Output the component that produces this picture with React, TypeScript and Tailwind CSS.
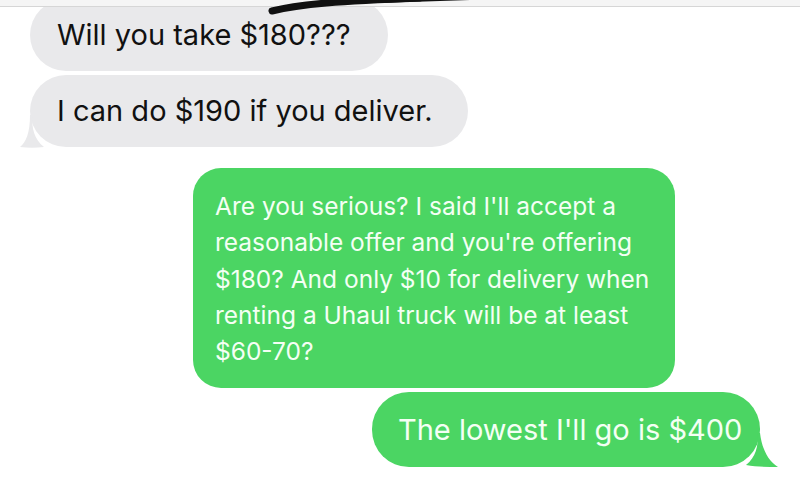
import React from "react";

const font = { fontFamily: 'Inter, "Liberation Sans", Arial, sans-serif' };

export default function App() {
  return (
    <div className="relative w-[800px] h-[481px] overflow-hidden bg-white" style={font}>
      <div className="flex flex-col mt-[-1px]">
        <div className="ml-[30px] w-[358px] h-[72px] rounded-[36px] bg-[#e9e9eb] pl-[27px] flex items-center text-[29px] text-[#111]">
          Will you take $180???
        </div>
        <div className="relative ml-[30px] mt-[4px] w-[438px] h-[72px] rounded-[36px] bg-[#e9e9eb] pl-[27px] flex items-center text-[29px] text-[#111]">
          <svg className="absolute left-[-12px] top-[40px]" width="40" height="34" viewBox="0 0 40 34">
            <path d="M12 0 L14 0 C14 14 16 24 26 32 C18 33 10 33 2 32 C8 27 12 18 12 0 Z" fill="#e9e9eb" />
          </svg>
          <span className="relative">I can do $190 if you deliver.</span>
        </div>
        <div className="ml-[193px] mt-[21px] w-[482px] h-[220px] rounded-[28px] bg-[#4bd563] pl-[22px] pt-[20px] text-[24.5px] leading-[36.3px] text-[#f4fff4]">
          Are you serious? I said I'll accept a<br />
          reasonable offer and you're offering<br />
          $180? And only $10 for delivery when<br />
          renting a Uhaul truck will be at least<br />
          $60-70?
        </div>
        <div className="relative ml-[372px] mt-[4px] w-[388px] h-[75px] rounded-[37px] bg-[#4bd563] pl-[26px] flex items-center text-[29px] text-[#f4fff4]">
          <svg className="absolute right-[-20px] top-[41px]" width="40" height="34" viewBox="0 0 40 34">
            <path d="M20 0 L18 0 C18 14 16 24 6 32 C16 34 28 34 38 34 C28 28 22 16 20 0 Z" fill="#4bd563" />
          </svg>
          <span className="relative">The lowest I'll go is $400</span>
        </div>
      </div>
      <div className="absolute top-0 left-0 w-[800px] h-[7px] bg-[#f5f5f5] border-b border-[#d6d6d6]" />
      <svg className="absolute top-0 left-0" width="800" height="20" viewBox="0 0 800 20">
        <path d="M272 11 C300 4 340 1 420 -2" stroke="#111" strokeWidth="7" strokeLinecap="round" fill="none" />
        <path d="M380 1 C410 0 440 -1 470 -2" stroke="#111" strokeWidth="4" strokeLinecap="round" fill="none" />
      </svg>
    </div>
  );
}
